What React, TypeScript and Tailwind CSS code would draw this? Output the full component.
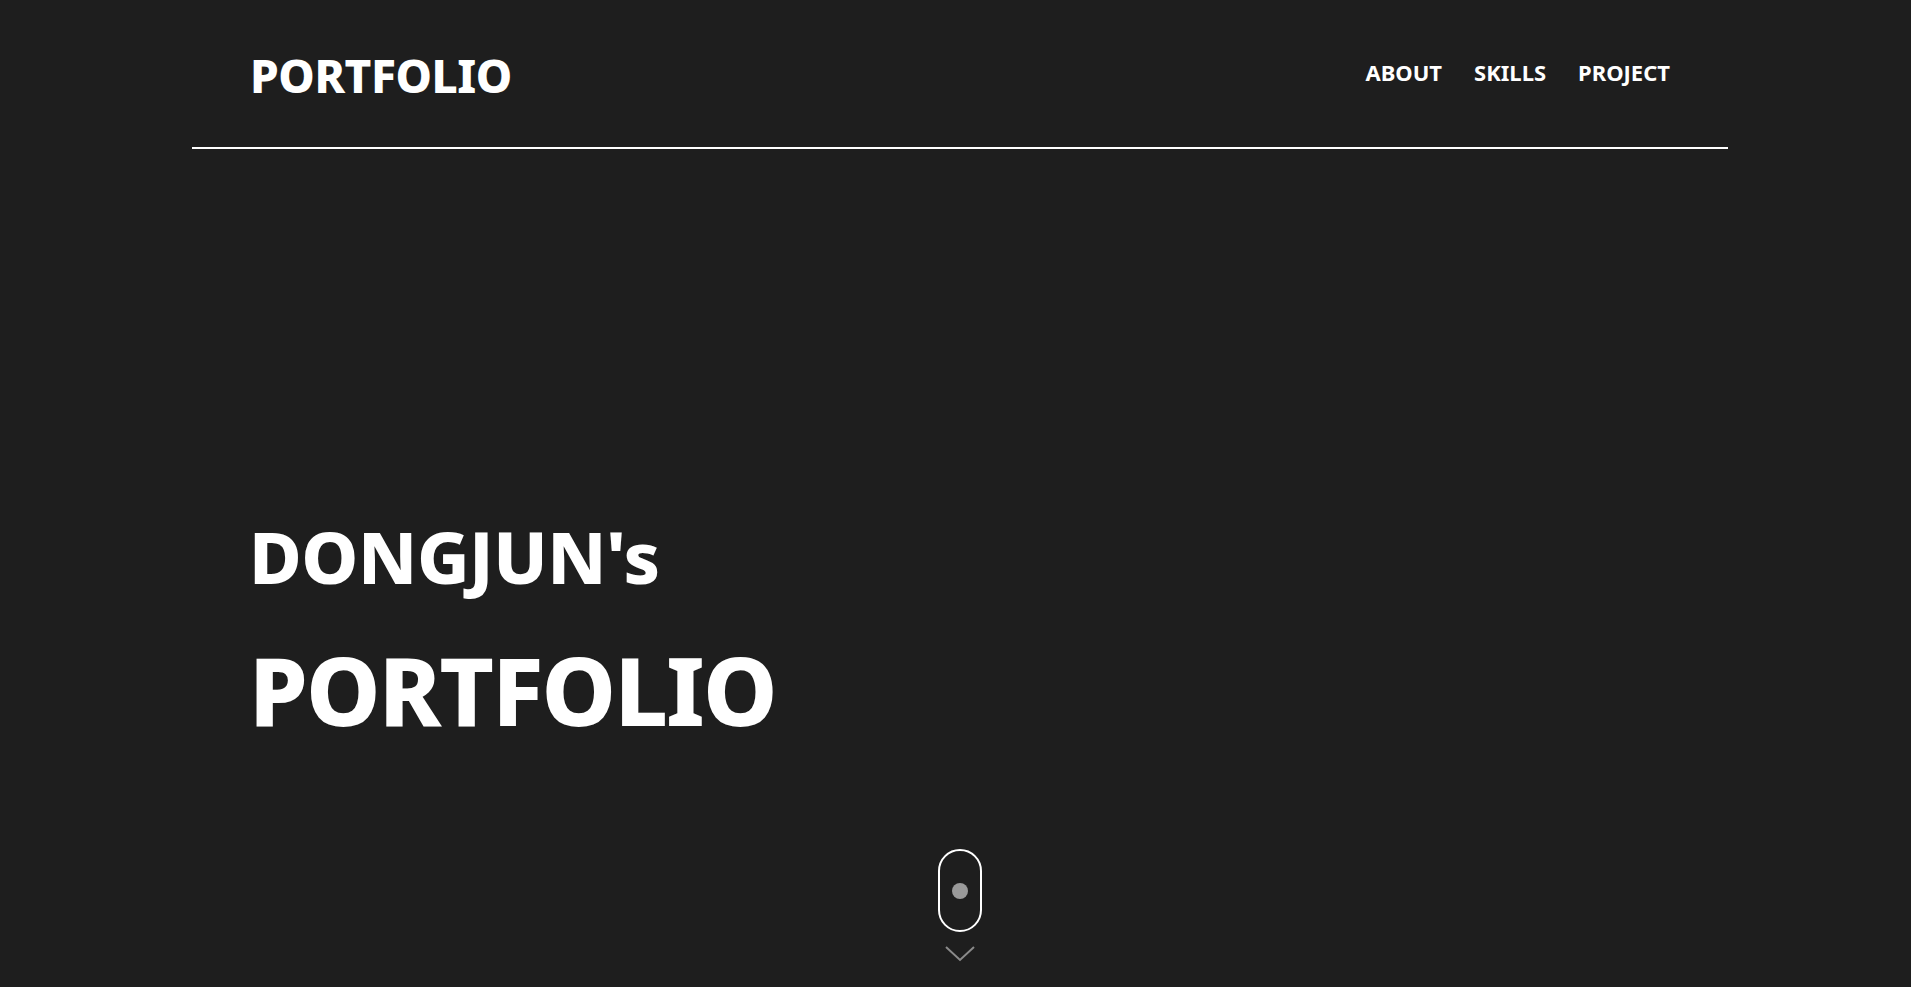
function App() {
  return (
    <div className="min-h-screen w-full overflow-hidden bg-[#1e1e1e] font-['Noto_Sans','Open_Sans',sans-serif] text-white">
      <div className="ml-[192px] w-[1536px]">
        <header className="flex h-[149px] items-center justify-between border-b-2 border-white px-[58px] pt-[2px]">
          <h1 className="text-[46px] font-extrabold leading-none tracking-[-0.01em]">PORTFOLIO</h1>
          <nav className="flex gap-[32px] pb-[6px] text-[22px] font-bold leading-none">
            <span>ABOUT</span>
            <span>SKILLS</span>
            <span>PROJECT</span>
          </nav>
        </header>

        <section className="px-[57px] pt-[371px]">
          <h2 className="text-[72px] font-extrabold leading-none tracking-[-0.006em]">DONGJUN's</h2>
          <h2 className="mt-[51px] text-[94px] font-extrabold leading-none tracking-[-0.02em]">PORTFOLIO</h2>
        </section>

        <div className="mt-[112px] flex flex-col items-center">
          <div className="flex h-[83px] w-[44px] items-center justify-center rounded-full border-2 border-white">
            <div className="h-[16px] w-[16px] rounded-full bg-[#9a9a9a]" />
          </div>
          <svg className="mt-[14px]" width="30" height="16" viewBox="0 0 30 16" fill="none">
            <path d="M1 1 L15 14 L29 1" stroke="#8a8a8a" strokeWidth="2" />
          </svg>
        </div>
      </div>
    </div>
  );
}

export default App;
